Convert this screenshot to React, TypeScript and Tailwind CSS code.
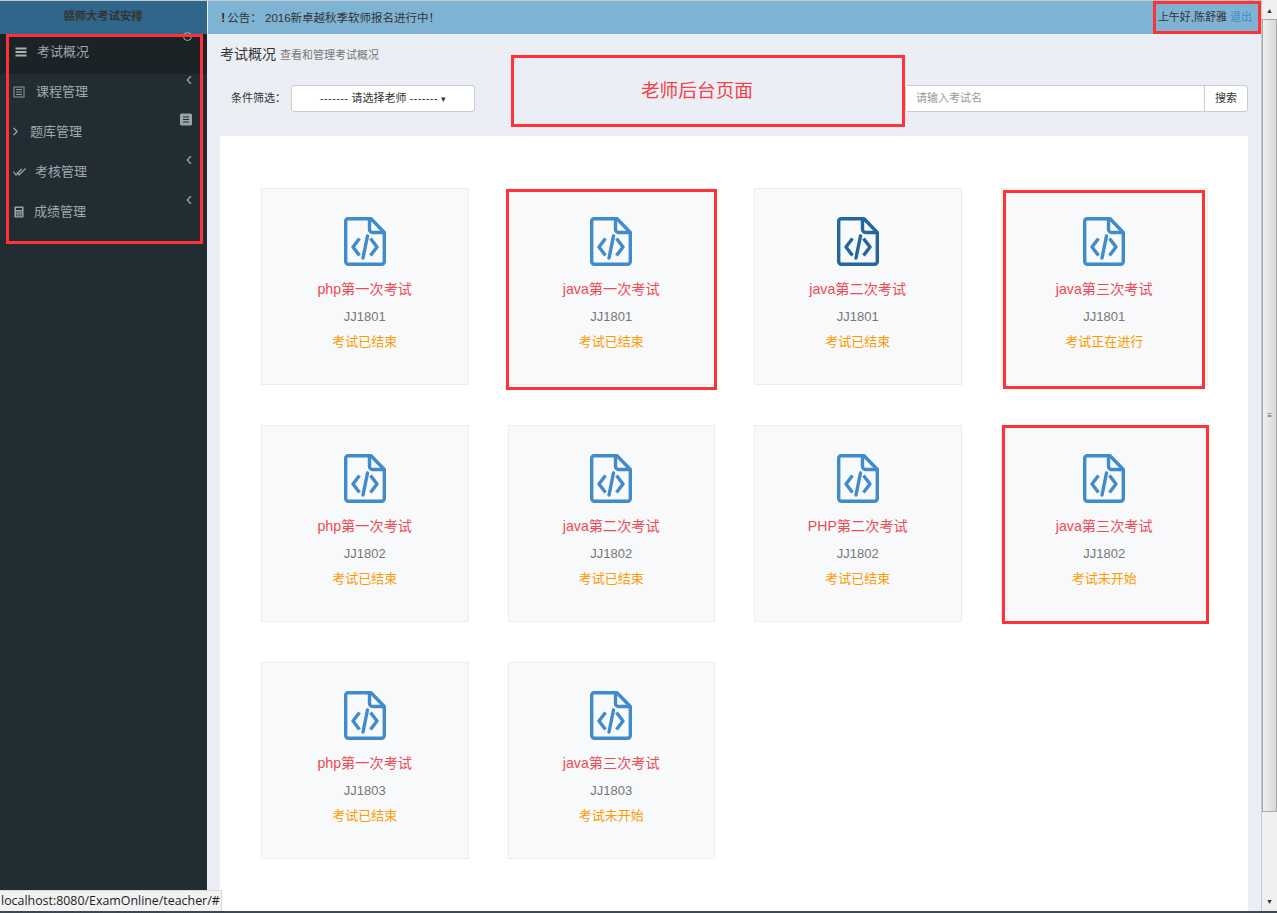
import { ChevronLeft, ChevronRight } from "lucide-react";

const font = { cjk: "font-['Liberation_Sans','Noto_Sans_CJK_SC',sans-serif]" };

function BarsIcon() {
  return (
    <svg width="12" height="12" viewBox="0 0 12 12" fill="#aab2b6">
      <rect x="0.500" y="1.500" width="11" height="2" />
      <rect x="0.500" y="5" width="11" height="2" />
      <rect x="0.500" y="8.500" width="11" height="2" />
    </svg>
  );
}

function ListIcon() {
  return (
    <svg width="12" height="12" viewBox="0 0 12 12" fill="none" stroke="#8f999e">
      <rect x="1" y="1" width="10" height="10" />
      <path d="M3 3.500H9M3 6H9M3 8.500H9" />
    </svg>
  );
}

function DoubleCheckIcon() {
  return (
    <svg width="15" height="10" viewBox="0 0 15 10" fill="none" stroke="#98a2a7" strokeWidth="1.500">
      <path d="M0.500 4.500L3.500 8.500L10 1.500" />
      <path d="M5 5.500L7 8.500L14.500 1" />
    </svg>
  );
}

function CalcIcon() {
  return (
    <svg width="10" height="12" viewBox="0 0 10 12" fill="#9aa3a8">
      <path d="M0.500 0.500H9.500V11.500H0.500ZM2 2V4H8V2ZM2 5.500V6.500H3.500V5.500ZM4.300 5.500V6.500H5.700V5.500ZM6.500 5.500V6.500H8V5.500ZM2 7.500V8.500H3.500V7.500ZM4.300 7.500V8.500H5.700V7.500ZM6.500 7.500V8.500H8V7.500ZM2 9.300V10.300H3.500V9.300ZM4.300 9.300V10.300H5.700V9.300ZM6.500 9.300V10.300H8V9.300Z" fillRule="evenodd" />
    </svg>
  );
}

const navItems = [
  { name: "考试概况", icon: <BarsIcon />, active: true, gap: "gap-[10px]", pl: "pl-[14px]" },
  { name: "课程管理", icon: <ListIcon />, gap: "gap-[11px]", pl: "pl-[12px]", arrow: true },
  { name: "题库管理", icon: <ChevronRight size={13} strokeWidth={2.200} />, gap: "gap-[8px]", pl: "pl-[9px]" },
  { name: "考核管理", icon: <DoubleCheckIcon />, gap: "gap-[9px]", pl: "pl-[13px]", arrow: true },
  { name: "成绩管理", icon: <CalcIcon />, gap: "gap-[9px]", pl: "pl-[12px]", arrow: true },
];

const exams = [
  { title: "php第一次考试", cls: "JJ1801", status: "考试已结束" },
  { title: "java第一次考试", cls: "JJ1801", status: "考试已结束" },
  { title: "java第二次考试", cls: "JJ1801", status: "考试已结束", hover: true },
  { title: "java第三次考试", cls: "JJ1801", status: "考试正在进行" },
  { title: "php第一次考试", cls: "JJ1802", status: "考试已结束" },
  { title: "java第二次考试", cls: "JJ1802", status: "考试已结束" },
  { title: "PHP第二次考试", cls: "JJ1802", status: "考试已结束" },
  { title: "java第三次考试", cls: "JJ1802", status: "考试未开始" },
  { title: "php第一次考试", cls: "JJ1803", status: "考试已结束" },
  { title: "java第三次考试", cls: "JJ1803", status: "考试未开始" },
];

function CodeFile({ color }: { color: string }) {
  return (
    <svg width="42" height="49" viewBox="0 0 42 49" fill="none" stroke={color} strokeWidth="3.400" strokeLinejoin="round">
      <path d="M4 1.700H27L40.300 15.500V44.500a2.800 2.800 0 0 1-2.800 2.800H4.500a2.800 2.800 0 0 1-2.800-2.800V4a2.300 2.300 0 0 1 2.300-2.300Z" />
      <path d="M25.500 2V12.500a3 3 0 0 0 3 3H40" />
      <path d="M15.500 21.500L9 30L15.500 38.500" />
      <path d="M26.500 21.500L33 30L26.500 38.500" />
      <path d="M23.500 19L19 41" strokeLinecap="round" />
    </svg>
  );
}

function ExamCard({ exam }: { exam: (typeof exams)[number] }) {
  return (
    <div className="h-[197px] bg-[#f7f9fb] border border-[#eaedf2] flex flex-col items-center pt-[28px]">
      <CodeFile color={exam.hover ? "#24679f" : "#428bca"} />
      <div className="mt-[13px] text-[14.2px] leading-[20px] text-[#ef4a54]">{exam.title}</div>
      <div className="mt-[8px] text-[13px] leading-[20px] text-[#777]">{exam.cls}</div>
      <div className="mt-[5px] text-[13px] leading-[20px] text-[#f90]">{exam.status}</div>
    </div>
  );
}

export default function App() {
  return (
    <div className={`relative w-[1277px] h-[913px] overflow-hidden bg-[#ebeef4] ${font.cjk}`}>
      <div className="flex h-full w-[1261px] flex-col">
        {/* top bar */}
        <div className="h-px bg-[#c4c9cc]" />
        <div className="flex h-[33px] shrink-0">
          <div className="w-[207px] bg-[#2f6689] pr-[1px] text-center text-[11.3px] font-bold leading-[31px] text-[#333]">
            赣师大考试安排
          </div>
          <div className="ml-px flex flex-1 items-center justify-between bg-[#7fb3d3] pl-[13px] pr-[9px] text-[11px] text-[#333]">
            <span className="text-[11.5px]">
              <b className="text-[13px] mr-[2px]">!</b>公告： 2016新卓越秋季软师报名进行中！
            </span>
            <span>
              上午好,陈舒雅 <span className="text-[#428bca]">退出</span>
            </span>
          </div>
        </div>

        <div className="flex min-h-0 flex-1">
          {/* sidebar */}
          <aside className="relative w-[207px] shrink-0 bg-[#222d33] text-[13px] text-[#9fa8ad]">
            {navItems.map((item) => (
              <div
                key={item.name}
                className={`relative flex h-10 items-center pb-[5px] ${item.gap} ${item.pl} ${item.active ? "bg-[#1b2327]" : ""}`}
              >
                <span className="flex w-[13px] justify-center">{item.icon}</span>
                <span>{item.name}</span>
                {item.arrow && <ChevronLeft size={14} strokeWidth={2} className="absolute left-[182px] top-[-1px]" />}
              </div>
            ))}
            <svg width="12" height="13" viewBox="0 0 12 13" className="absolute left-[180px] top-[79px]">
              <rect x="0" y="0.500" width="12" height="12" rx="1.500" fill="#9aa3a8" />
              <path d="M3 4H9M3 6.500H9M3 9H9" stroke="#222d33" strokeWidth="1.200" />
            </svg>
            <span className="absolute left-[183px] top-[-2px] size-[9px] rounded-full border border-[#9fa8ad]" />
          </aside>

          {/* main */}
          <main className="flex min-w-0 flex-1 flex-col pl-[13px] pr-[13px]">
            <div className="mt-[10px] flex items-baseline gap-[4px]">
              <span className="text-[14px] leading-[20px] text-[#333]">考试概况</span>
              <span className="text-[11px] text-[#777]">查看和管理考试概况</span>
            </div>
            <div className="mt-[20px] flex h-[28px] items-center">
              <span className="ml-[11px] w-[60px] text-[11px] text-[#333]">条件筛选：</span>
              <button className="h-[27px] w-[184px] rounded-[3px] border border-[#ccc] bg-white text-[11px] text-[#333]">
                <span className="tracking-[0.400px]">-------</span> 请选择老师{" "}
                <span className="tracking-[0.400px]">-------</span> <span className="text-[9px]">▾</span>
              </button>
              <div className="ml-auto flex h-[27px] w-[343px] rounded-[3px] border border-[#ccc] bg-white">
                <input
                  placeholder="请输入考试名"
                  className="min-w-0 flex-1 bg-white pl-[10px] pt-[1px] text-[11px] outline-none placeholder:text-[#999]"
                />
                <button className="w-[43px] border-l border-[#ccc] text-[11px] text-[#333]">搜索</button>
              </div>
            </div>

            <section className="mt-[24px] flex-1 bg-white pl-[41px] pr-[40px] pt-[52px]">
              <div className="grid grid-cols-4 gap-x-[39px] gap-y-[40px]">
                {exams.map((exam, i) => (
                  <ExamCard key={i} exam={exam} />
                ))}
              </div>
            </section>
          </main>
        </div>
      </div>

      {/* scrollbar */}
      <div className="absolute right-0 top-0 flex h-[911px] w-[16px] flex-col items-center border-l border-[#c8c8c8] bg-[#f0f0f0]">
        <span className="mt-[7px] text-[7px] leading-[8px] text-[#333]">▲</span>
        <div className="mt-[4px] flex h-[793px] w-[15px] items-center justify-center border border-[#a8a8a8] bg-[linear-gradient(90deg,#f0f0f0,#d8d8d8)] text-[8px] text-[#555]">
          ≡
        </div>
        <span className="mt-auto mb-[5px] text-[7px] leading-[8px] text-[#333]">▼</span>
      </div>

      {/* annotation boxes */}
      <div className="absolute left-[6px] top-[34px] h-[210px] w-[197px] border-[3px] border-[#fe3237]" />
      <div className="absolute left-[1153px] top-[1px] h-[33px] w-[108px] border-[3px] border-[#fe3237]" />
      <div className="absolute left-[511px] top-[55px] flex h-[72px] w-[394px] items-center justify-center border-[3px] border-[#fe3237] bg-[#ebeef4] pr-[22px] text-[18.7px] text-[#f0424a]">
        老师后台页面
      </div>
      <div className="absolute left-[506px] top-[189px] h-[201px] w-[211px] border-[3px] border-[#fe3237]" />
      <div className="absolute left-[1003px] top-[190px] h-[199px] w-[202px] border-[3px] border-[#fe3237]" />
      <div className="absolute left-[1002px] top-[425px] h-[199px] w-[207px] border-[3px] border-[#fe3237]" />

      {/* browser status */}
      <div className="absolute bottom-[2px] left-0 h-[21px] w-[222px] border-r border-t border-[#d8d8d8] bg-[#f2f2f2] pl-[1px] text-[12.4px] leading-[20px] text-[#222] font-['Open_Sans',sans-serif]">
        localhost:8080/ExamOnline/teacher/#
      </div>
      <div className="absolute bottom-0 left-0 h-[2px] w-full bg-[#3c4a55]" />
    </div>
  );
}
